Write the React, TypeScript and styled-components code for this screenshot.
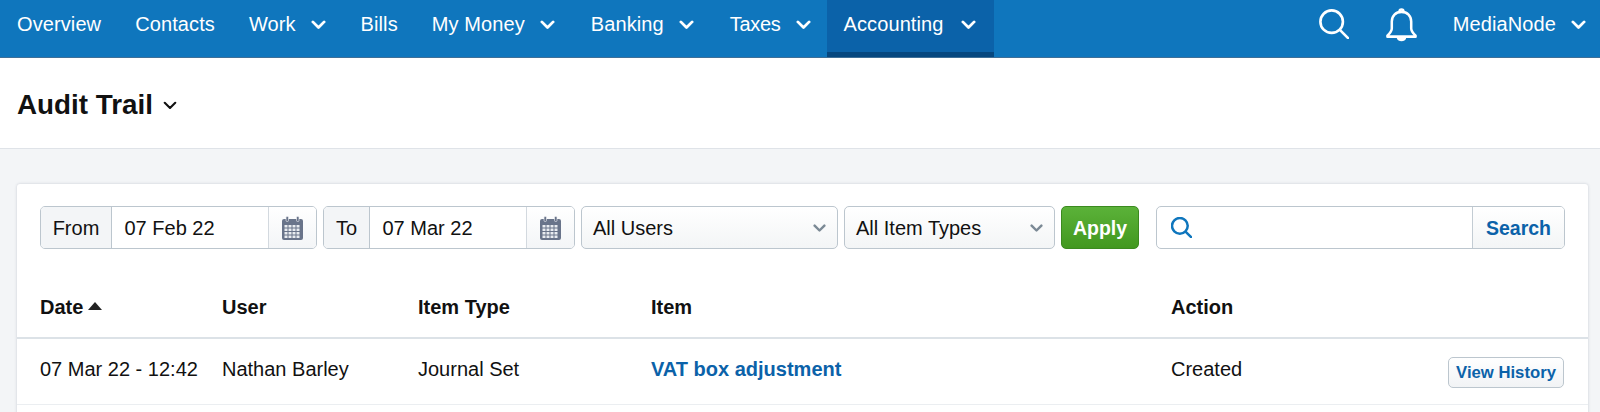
import React from "react";
import styled, { createGlobalStyle } from "styled-components";

const Global = createGlobalStyle`
  html, body { margin: 0; padding: 0; background: #f3f5f7; }
  body { font-family: "Liberation Sans", Arial, sans-serif; color: #111; overflow: hidden; height: 412px; }
`;

const Page = styled.div`
  height: 412px;
  overflow: hidden;
`;

const Nav = styled.nav`
  display: flex;
  justify-content: space-between;
  height: 57px;
  background: #0f76bd;
  border-bottom: 1px solid #3f6f97;
  color: #fff;
  font-size: 20px;
`;

const NavGroup = styled.div`
  display: flex;
  align-items: stretch;
`;

const NavItem = styled.div<{ $active?: boolean; $pr: number; $gap?: number; $ls?: number }>`
  display: flex;
  align-items: center;
  gap: ${(p) => p.$gap ?? 15}px;
  padding: 0 ${(p) => p.$pr}px 3px 17px;
  box-sizing: border-box;
  height: 57px;
  white-space: nowrap;
  letter-spacing: ${(p) => p.$ls ?? 0.1}px;
  background: ${(p) => (p.$active ? "#0b62a9" : "transparent")};
  border-bottom: 5px solid ${(p) => (p.$active ? "#06477f" : "transparent")};
`;

const IconButton = styled.div<{ $mr: number }>`
  display: flex;
  align-items: center;
  justify-content: center;
  margin-right: ${(p) => p.$mr}px;
  padding-bottom: 9px;
`;

const TitleBar = styled.header`
  display: flex;
  align-items: center;
  gap: 10px;
  height: 91px;
  padding: 4px 17px 0;
  box-sizing: border-box;
  background: #fff;
  border-bottom: 1px solid #dfe3e8;
`;

const Title = styled.h1`
  margin: 0;
  font-size: 27.8px;
  font-weight: 700;
  color: #111;
`;

const Card = styled.section`
  margin: 35px 12px 0 17px;
  background: #fff;
  border-radius: 3px 3px 0 0;
  box-shadow: 0 0 3px rgba(40, 60, 80, 0.22);
  height: 300px;
`;

const Toolbar = styled.div`
  display: flex;
  gap: 6px;
  padding: 22px 23px 0;
  height: 43px;
`;

const Group = styled.div<{ $w: number }>`
  display: flex;
  flex: none;
  width: ${(p) => p.$w}px;
  box-sizing: border-box;
  height: 43px;
  border: 1px solid #bcc6ce;
  border-radius: 5px;
  overflow: hidden;
  font-size: 20px;
  background: #fff;
`;

const Addon = styled.div<{ $w: number }>`
  display: flex;
  align-items: center;
  justify-content: center;
  width: ${(p) => p.$w}px;
  flex: none;
  padding-top: 2px;
  box-sizing: border-box;
  background: #f3f5f7;
  border-right: 1.5px solid #bcc6ce;
`;

const DateValue = styled.div`
  flex: 1;
  display: flex;
  align-items: center;
  padding: 1px 0 0 12.5px;
`;

const CalendarBox = styled.div`
  flex: none;
  width: 47px;
  display: flex;
  align-items: center;
  justify-content: center;
  background: linear-gradient(#fff, #f3f5f7);
  border-left: 1px solid #d3d9df;
`;

const Select = styled.div<{ $w: number }>`
  display: flex;
  flex: none;
  align-items: center;
  justify-content: space-between;
  width: ${(p) => p.$w}px;
  box-sizing: border-box;
  height: 43px;
  padding: 2px 11px 0 11px;
  border: 1px solid #bcc6ce;
  border-radius: 5px;
  background: linear-gradient(#fff, #f3f5f6);
  font-size: 20px;
`;

const Apply = styled.button`
  flex: none;
  width: 78px;
  height: 43px;
  margin-right: 11px;
  padding: 2px 0 0;
  border: 1px solid #3b8a1f;
  border-radius: 5px;
  background: linear-gradient(#5bb239, #42981f);
  color: #fff;
  font: 700 19.5px "Liberation Sans", Arial, sans-serif;
`;

const SearchField = styled.div`
  flex: 1;
  display: flex;
  align-items: center;
  padding-left: 14px;
`;

const SearchButton = styled.div`
  flex: none;
  width: 91px;
  display: flex;
  align-items: center;
  justify-content: center;
  padding-top: 2px;
  border-left: 1px solid #c3ccd3;
  background: linear-gradient(#fff, #f3f5f6);
  color: #0b62a9;
  font-weight: 700;
  font-size: 19.5px;
`;

const Row = styled.div<{ $head?: boolean }>`
  display: grid;
  grid-template-columns: 182px 196px 233px 520px 1fr;
  align-items: center;
  box-sizing: border-box;
  padding: ${(p) => (p.$head ? "5px 23px 0" : "0 23px 5px")};
  margin-top: ${(p) => (p.$head ? 23 : 0)}px;
  height: ${(p) => (p.$head ? 67 : 66)}px;
  border-bottom: ${(p) => (p.$head ? "2px solid #dce2e7" : "1px solid #ebeef1")};
  font-size: 20px;
  font-weight: ${(p) => (p.$head ? 700 : 400)};
`;

const SortCell = styled.div`
  display: flex;
  align-items: center;
  gap: 5px;
`;

const SortArrow = styled.span`
  width: 0;
  height: 0;
  border-left: 7px solid transparent;
  border-right: 7px solid transparent;
  border-bottom: 8px solid #222;
  margin-top: -3px;
`;

const ItemLink = styled.a`
  color: #0b62a9;
  font-weight: 700;
`;

const ActionCell = styled.div`
  display: flex;
  justify-content: space-between;
  align-items: center;
`;

const HistoryButton = styled.button`
  width: 116px;
  height: 31px;
  margin: 6px 1px 0 0;
  padding: 1px 0 0;
  border: 1px solid #bcc6ce;
  border-radius: 5px;
  background: linear-gradient(#fff, #f1f3f5);
  color: #0b62a9;
  font: 700 16.7px "Liberation Sans", Arial, sans-serif;
`;

const Chevron = ({ size = 15, color = "#fff", sw = 3 }: { size?: number; color?: string; sw?: number }) => (
  <svg width={size} height={size * 0.625} viewBox="0 0 16 10" fill="none">
    <path d="M2 2l6 6 6-6" stroke={color} strokeWidth={sw} strokeLinecap="round" strokeLinejoin="round" />
  </svg>
);

const SearchIcon = ({ size, color, sw }: { size: number; color: string; sw: number }) => (
  <svg width={size} height={size} viewBox="0 0 32 32" fill="none" stroke={color} strokeWidth={sw} strokeLinecap="round">
    <circle cx="13.5" cy="13.5" r="12" />
    <path d="M22.5 22.5L31 31" />
  </svg>
);

const Bell = () => (
  <svg width="33" height="35" viewBox="0 0 34 36" fill="none" stroke="#fff" strokeWidth="2.6" strokeLinejoin="round">
    <path d="M17 5c-6 0-10 4-10 10v7c0 3-2 5-4.5 7.5v1h29v-1C29 27 27 25 27 22v-7c0-6-4-10-10-10z" />
    <path d="M15 4.5a2 2 0 014 0" />
    <path d="M13.5 32c1 2.5 6 2.5 7 0z" fill="#fff" />
  </svg>
);

const Calendar = () => (
  <svg width="21" height="24" viewBox="0 0 21 24">
    <path d="M2 3h17a2 2 0 012 2v17a2 2 0 01-2 2H2a2 2 0 01-2-2V5a2 2 0 012-2z" fill="#69748a" />
    <rect x="4" y="0.5" width="2.5" height="5" rx="1" fill="#69748a" stroke="#f6f7f8" strokeWidth="0.6" />
    <rect x="14.5" y="0.5" width="2.5" height="5" rx="1" fill="#69748a" stroke="#f6f7f8" strokeWidth="0.6" />
    <g fill="#e9ecf0">
      {[9, 12.5, 16, 19.5].map((y) =>
        [2.5, 6.5, 10.5, 14.5].map((x) => <rect key={`${x}-${y}`} x={x} y={y} width="3" height="2.5" />)
      )}
    </g>
  </svg>
);

type Item = { label: string; chevron?: boolean; active?: boolean; pr?: number; gap?: number; ls?: number };

const navItems: Item[] = [
  { label: "Overview" },
  { label: "Contacts" },
  { label: "Work", chevron: true },
  { label: "Bills" },
  { label: "My Money", chevron: true, pr: 19 },
  { label: "Banking", chevron: true, pr: 19 },
  { label: "Taxes", chevron: true, ls: -0.3, pr: 16 },
  { label: "Accounting", chevron: true, active: true, gap: 17 },
];

export default function App() {
  return (
    <Page>
      <Global />
      <Nav>
        <NavGroup>
          {navItems.map((it) => (
            <NavItem key={it.label} $active={it.active} $pr={it.pr ?? (it.chevron ? 18 : 17)} $gap={it.gap} $ls={it.ls}>
              {it.label}
              {it.chevron && <Chevron />}
            </NavItem>
          ))}
        </NavGroup>
        <NavGroup>
          <IconButton $mr={36}>
            <SearchIcon size={30} color="#fff" sw={2.8} />
          </IconButton>
          <IconButton $mr={18}>
            <Bell />
          </IconButton>
          <NavItem $pr={14}>
            MediaNode
            <Chevron />
          </NavItem>
        </NavGroup>
      </Nav>
      <TitleBar>
        <Title>Audit Trail</Title>
        <Chevron size={14} color="#111" sw={2.4} />
      </TitleBar>
      <Card>
        <Toolbar>
          <Group $w={277}>
            <Addon $w={71}>From</Addon>
            <DateValue>07 Feb 22</DateValue>
            <CalendarBox>
              <Calendar />
            </CalendarBox>
          </Group>
          <Group $w={252}>
            <Addon $w={46}>To</Addon>
            <DateValue>07 Mar 22</DateValue>
            <CalendarBox>
              <Calendar />
            </CalendarBox>
          </Group>
          <Select $w={257}>
            All Users
            <Chevron size={13} color="#7b8995" sw={3} />
          </Select>
          <Select $w={211}>
            All Item Types
            <Chevron size={13} color="#7b8995" sw={3} />
          </Select>
          <Apply>Apply</Apply>
          <Group $w={409}>
            <SearchField>
              <SearchIcon size={21} color="#0f76bd" sw={3.8} />
            </SearchField>
            <SearchButton>Search</SearchButton>
          </Group>
        </Toolbar>
        <Row $head>
          <SortCell>
            Date
            <SortArrow />
          </SortCell>
          <div>User</div>
          <div>Item Type</div>
          <div>Item</div>
          <div>Action</div>
        </Row>
        <Row>
          <div>07 Mar 22 - 12:42</div>
          <div>Nathan Barley</div>
          <div>Journal Set</div>
          <ItemLink>VAT box adjustment</ItemLink>
          <ActionCell>
            Created
            <HistoryButton>View History</HistoryButton>
          </ActionCell>
        </Row>
      </Card>
    </Page>
  );
}
